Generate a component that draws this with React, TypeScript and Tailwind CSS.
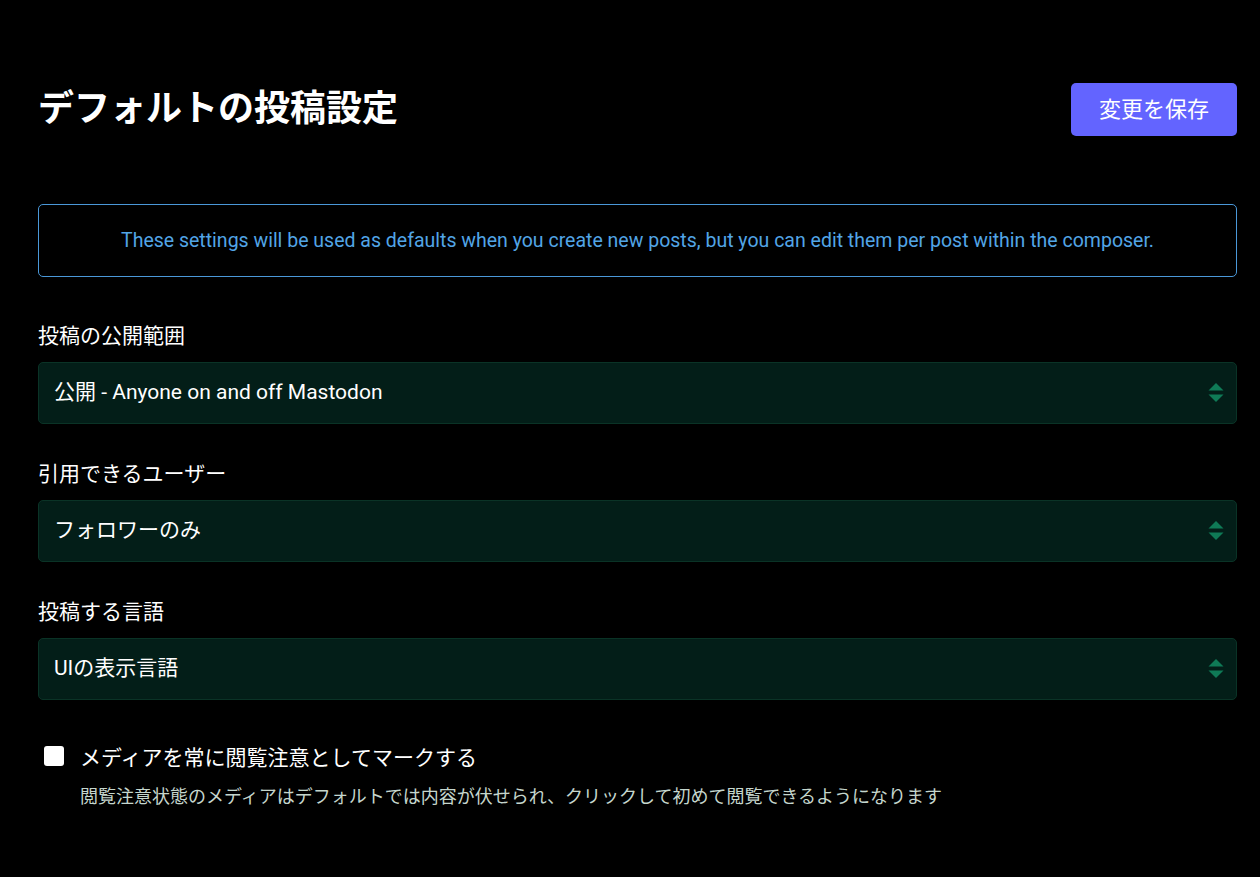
import React from 'react';

const fields = [
  { label: '投稿の公開範囲', value: '公開 - Anyone on and off Mastodon' },
  { label: '引用できるユーザー', value: 'フォロワーのみ' },
  { label: '投稿する言語', value: 'UIの表示言語' },
];

const SelectArrows = () => (
  <svg width="16" height="22" viewBox="0 0 16 22" className="shrink-0">
    <path d="M8 1 L15.5 8.5 H0.5 Z" fill="#0f7a56" />
    <path d="M0.5 12.5 H15.5 L8 20 Z" fill="#0f7a56" />
  </svg>
);

const App = () => {
  return (
    <div
      className="min-h-[877px] bg-black text-white pl-[38px] pr-[23px] pt-[83px]"
      style={{ fontFamily: 'Roboto, "Noto Sans CJK JP", sans-serif' }}
    >
      <div className="flex items-center justify-between">
        <h1 className="text-[36px] leading-[53px] font-bold">デフォルトの投稿設定</h1>
        <button className="h-[53px] w-[166px] rounded-[5px] bg-[#6364ff] text-[22px] text-white">
          変更を保存
        </button>
      </div>

      <div className="mt-[68px] h-[73px] border border-[#4a98d8] rounded-[5px] flex items-center justify-center text-[19.5px] text-[#52a5e6]">
        These settings will be used as defaults when you create new posts, but you can edit them per post within the composer.
      </div>

      <div className="mt-[45px] flex flex-col gap-[36px]">
        {fields.map((f) => (
          <div key={f.label}>
            <div className="text-[21px] leading-[28px] mb-[12px]">{f.label}</div>
            <div className="h-[62px] rounded-[5px] bg-[#031e18] border border-[#0a3326] flex items-center justify-between pl-[15px] pr-[12px]">
              <span className="text-[21px]">{f.value}</span>
              <SelectArrows />
            </div>
          </div>
        ))}
      </div>

      <div className="mt-[44px] flex gap-[16px] pl-[6px]">
        <div className="mt-[2px] w-[20px] h-[20px] rounded-[3px] bg-white shrink-0" />
        <div>
          <div className="text-[21px] leading-[28px]">メディアを常に閲覧注意としてマークする</div>
          <div className="mt-[13px] text-[18px] leading-[24px] text-[#c5d6cd]">
            閲覧注意状態のメディアはデフォルトでは内容が伏せられ、クリックして初めて閲覧できるようになります
          </div>
        </div>
      </div>
    </div>
  );
};

export default App;
